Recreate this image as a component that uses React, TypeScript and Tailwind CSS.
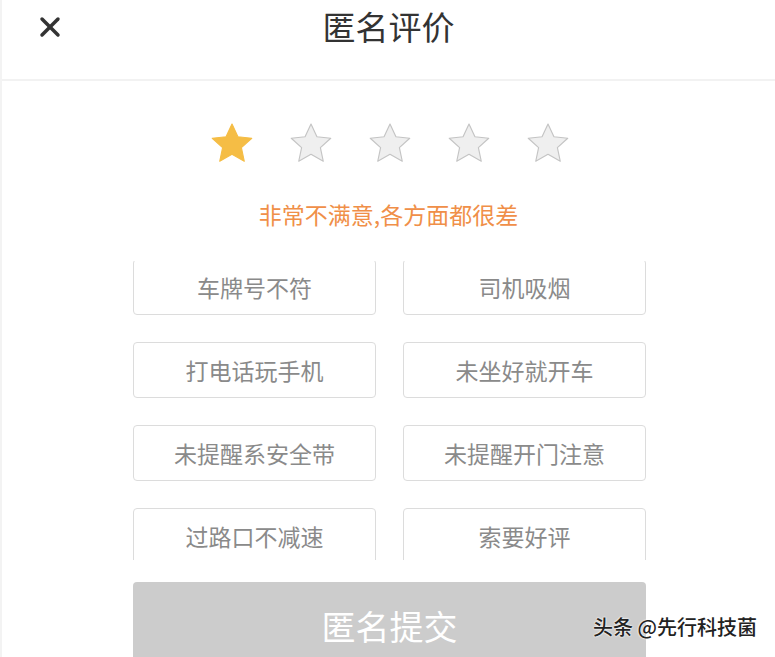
import { X } from "lucide-react";

const TAGS = [
  "车牌号不符",
  "司机吸烟",
  "打电话玩手机",
  "未坐好就开车",
  "未提醒系安全带",
  "未提醒开门注意",
  "过路口不减速",
  "索要好评",
];

const FONT = "font-['Noto_Sans_CJK_SC','Noto_Sans',sans-serif]";

function Star({ active }: { active: boolean }) {
  return (
    <svg width="46" height="46" viewBox="0 0 24 24">
      <path
        d="M12 1.6l3.1 6.6 7.2.8-5.4 4.9 1.5 7.1L12 17.4 5.6 21l1.5-7.1L1.7 9l7.2-.8z"
        fill={active ? "#f5bd45" : "#efefef"}
        stroke={active ? "#f5bd45" : "#c4c4c4"}
        strokeWidth="0.6"
        strokeLinejoin="round"
      />
    </svg>
  );
}

export default function App() {
  const rating = 1;

  return (
    <div
      className={`relative w-[775px] h-[657px] overflow-hidden bg-white border-l-2 border-[#f3f3f3] ${FONT}`}
    >
      {/* Header */}
      <div className="relative flex items-center justify-center h-[81px] border-b-2 border-[#f2f2f2]">
        <X className="absolute left-[32px] top-[11px] w-[32px] h-[32px] text-[#333]" strokeWidth={2.6} />
        <h1 className="-mt-[27px] text-[33px] text-[#333] leading-none">匿名评价</h1>
      </div>

      {/* Rating */}
      <div className="flex justify-center gap-[33px] mt-[40px] pl-[3px]">
        {[1, 2, 3, 4, 5].map((n) => (
          <Star key={n} active={n <= rating} />
        ))}
      </div>
      <p className="mt-[36px] text-center text-[23px] leading-none text-[#f08f48]">
        非常不满意,各方面都很差
      </p>

      {/* Tags */}
      <div className="mt-[35px] h-[299px] overflow-hidden">
        <div className="-mt-[2px] grid grid-cols-2 gap-x-[27px] gap-y-[27px] w-[513px] ml-[131px]">
          {TAGS.map((tag) => (
            <div
              key={tag}
              className="h-[56px] flex items-center justify-center rounded-[4px] border border-[#dcdcdc] text-[23px] text-[#8a8a8a]"
            >
              {tag}
            </div>
          ))}
        </div>
      </div>

      {/* Submit */}
      <div className="mt-[22px] ml-[131px] w-[513px] h-[92px] rounded-[4px] bg-[#cccccc] flex items-center justify-center pb-[4px]">
        <span className="text-[34px] text-white leading-none">匿名提交</span>
      </div>

      <span className="absolute right-[18px] top-[617px] text-[20px] leading-none font-medium text-[#222] [text-shadow:0_0_2px_#fff,0_0_2px_#fff]">
        头条 @先行科技菌
      </span>
    </div>
  );
}
